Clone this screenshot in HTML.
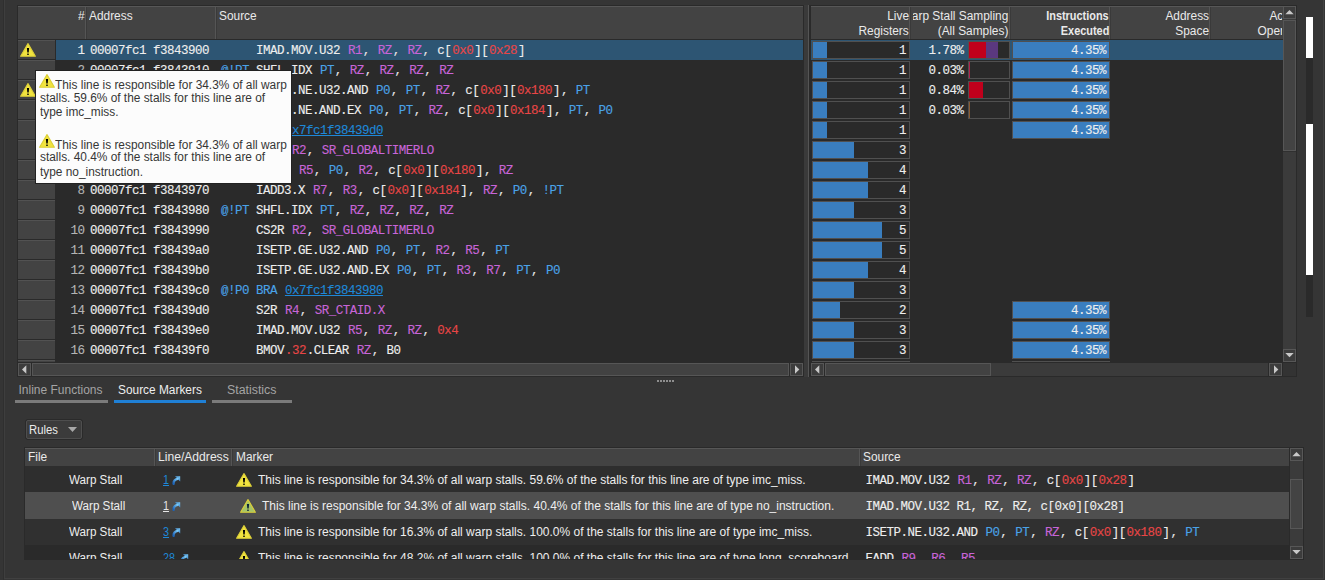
<!DOCTYPE html>
<html><head><meta charset="utf-8"><style>
html,body{margin:0;padding:0;width:1325px;height:580px;overflow:hidden;background:#353535}
body *{position:absolute;box-sizing:content-box}
body span{position:static}
.t{font-family:"Liberation Sans",sans-serif;font-size:12px;line-height:14px;white-space:pre;color:#eaeaea}
.m{font-family:"Liberation Mono",monospace;font-size:12.5px;letter-spacing:-0.5px;line-height:14px;white-space:pre;-webkit-text-stroke:0.12px currentColor}
.m span{padding-right:0.9px}

svg path, svg rect, svg defs, svg stop, svg linearGradient{position:static}
</style></head><body>
<div style="left:0px;top:0px;width:1325px;height:580px;background:#353535;"></div>
<div style="left:3px;top:0px;width:1px;height:580px;background:#2f2f2f;"></div>
<div style="left:4px;top:0px;width:1px;height:578px;background:#3e3e3e;"></div>
<div style="left:4px;top:578px;width:1320px;height:1px;background:#404040;"></div>
<div style="left:1323px;top:0px;width:1px;height:579px;background:#424242;"></div>
<div style="left:17px;top:5px;width:787px;height:372px;background:#2a2a2a;"></div>
<div style="left:18px;top:6px;width:785px;height:33px;background:#434343;"></div>
<div style="left:18px;top:6px;width:785px;height:1px;background:#575757;"></div>
<div style="left:85px;top:7px;width:1px;height:32px;background:#555555;"></div>
<div style="left:86px;top:7px;width:1px;height:32px;background:#3a3a3a;"></div>
<div style="left:215px;top:7px;width:1px;height:32px;background:#555555;"></div>
<div style="left:216px;top:7px;width:1px;height:32px;background:#3a3a3a;"></div>
<div class="t" style="right:1240px;top:9px;color:#eaeaea;transform:scaleX(0.99);transform-origin:100% 0;">#</div>
<div class="t" style="left:89px;top:9px;color:#eaeaea;transform:scaleX(0.99);transform-origin:0 0;">Address</div>
<div class="t" style="left:219px;top:9px;color:#eaeaea;transform:scaleX(0.99);transform-origin:0 0;">Source</div>
<div style="left:18px;top:40px;width:37px;height:19px;background:#434343;"></div>
<div style="left:18px;top:40px;width:37px;height:1px;background:#525252;"></div>
<div style="left:56px;top:40px;width:747px;height:20px;background:#2d5573;"></div>
<div style="left:18px;top:60px;width:37px;height:19px;background:#434343;"></div>
<div style="left:18px;top:60px;width:37px;height:1px;background:#525252;"></div>
<div style="left:56px;top:60px;width:747px;height:20px;background:#2a2a2a;"></div>
<div style="left:18px;top:80px;width:37px;height:19px;background:#434343;"></div>
<div style="left:18px;top:80px;width:37px;height:1px;background:#525252;"></div>
<div style="left:56px;top:80px;width:747px;height:20px;background:#2a2a2a;"></div>
<div style="left:18px;top:100px;width:37px;height:19px;background:#434343;"></div>
<div style="left:18px;top:100px;width:37px;height:1px;background:#525252;"></div>
<div style="left:56px;top:100px;width:747px;height:20px;background:#2a2a2a;"></div>
<div style="left:18px;top:120px;width:37px;height:19px;background:#434343;"></div>
<div style="left:18px;top:120px;width:37px;height:1px;background:#525252;"></div>
<div style="left:56px;top:120px;width:747px;height:20px;background:#2a2a2a;"></div>
<div style="left:18px;top:140px;width:37px;height:19px;background:#434343;"></div>
<div style="left:18px;top:140px;width:37px;height:1px;background:#525252;"></div>
<div style="left:56px;top:140px;width:747px;height:20px;background:#2a2a2a;"></div>
<div style="left:18px;top:160px;width:37px;height:19px;background:#434343;"></div>
<div style="left:18px;top:160px;width:37px;height:1px;background:#525252;"></div>
<div style="left:56px;top:160px;width:747px;height:20px;background:#2a2a2a;"></div>
<div style="left:18px;top:180px;width:37px;height:19px;background:#434343;"></div>
<div style="left:18px;top:180px;width:37px;height:1px;background:#525252;"></div>
<div style="left:56px;top:180px;width:747px;height:20px;background:#2a2a2a;"></div>
<div style="left:18px;top:200px;width:37px;height:19px;background:#434343;"></div>
<div style="left:18px;top:200px;width:37px;height:1px;background:#525252;"></div>
<div style="left:56px;top:200px;width:747px;height:20px;background:#2a2a2a;"></div>
<div style="left:18px;top:220px;width:37px;height:19px;background:#434343;"></div>
<div style="left:18px;top:220px;width:37px;height:1px;background:#525252;"></div>
<div style="left:56px;top:220px;width:747px;height:20px;background:#2a2a2a;"></div>
<div style="left:18px;top:240px;width:37px;height:19px;background:#434343;"></div>
<div style="left:18px;top:240px;width:37px;height:1px;background:#525252;"></div>
<div style="left:56px;top:240px;width:747px;height:20px;background:#2a2a2a;"></div>
<div style="left:18px;top:260px;width:37px;height:19px;background:#434343;"></div>
<div style="left:18px;top:260px;width:37px;height:1px;background:#525252;"></div>
<div style="left:56px;top:260px;width:747px;height:20px;background:#2a2a2a;"></div>
<div style="left:18px;top:280px;width:37px;height:19px;background:#434343;"></div>
<div style="left:18px;top:280px;width:37px;height:1px;background:#525252;"></div>
<div style="left:56px;top:280px;width:747px;height:20px;background:#2a2a2a;"></div>
<div style="left:18px;top:300px;width:37px;height:19px;background:#434343;"></div>
<div style="left:18px;top:300px;width:37px;height:1px;background:#525252;"></div>
<div style="left:56px;top:300px;width:747px;height:20px;background:#2a2a2a;"></div>
<div style="left:18px;top:320px;width:37px;height:19px;background:#434343;"></div>
<div style="left:18px;top:320px;width:37px;height:1px;background:#525252;"></div>
<div style="left:56px;top:320px;width:747px;height:20px;background:#2a2a2a;"></div>
<div style="left:18px;top:340px;width:37px;height:19px;background:#434343;"></div>
<div style="left:18px;top:340px;width:37px;height:1px;background:#525252;"></div>
<div style="left:56px;top:340px;width:747px;height:20px;background:#2a2a2a;"></div>
<div style="left:18px;top:360px;width:37px;height:2px;background:#434343;"></div>
<div style="left:18px;top:360px;width:37px;height:1px;background:#525252;"></div>
<div style="left:56px;top:360px;width:747px;height:2px;background:#2a2a2a;"></div>
<div style="left:56px;top:40px;width:747px;height:322px;overflow:hidden">
<div class="m" style="right:718.5px;top:4px;color:#eeeeee">1</div>
<div class="m" style="left:34px;top:4px;color:#eeeeee">00007fc1 f3843900</div>
<div class="m" style="left:200px;top:4px;color:#eeeeee"><span style="color:#eeeeee">IMAD.MOV.U32 </span><span style="color:#c865d8">R1</span><span style="color:#e6e6e6">, </span><span style="color:#c865d8">RZ</span><span style="color:#e6e6e6">, </span><span style="color:#c865d8">RZ</span><span style="color:#e6e6e6">, </span><span style="color:#eeeeee">c[</span><span style="color:#e84646">0x0</span><span style="color:#eeeeee">][</span><span style="color:#e84646">0x28</span><span style="color:#eeeeee">]</span></div>
<div class="m" style="right:718.5px;top:24px;color:#b4b4b4">2</div>
<div class="m" style="left:34px;top:24px;color:#eeeeee">00007fc1 f3843910</div>
<div class="m" style="left:165px;top:24px;color:#4aa3e8">@!PT</div>
<div class="m" style="left:200px;top:24px;color:#eeeeee"><span style="color:#eeeeee">SHFL.IDX </span><span style="color:#4aa3e8">PT</span><span style="color:#e6e6e6">, </span><span style="color:#c865d8">RZ</span><span style="color:#e6e6e6">, </span><span style="color:#c865d8">RZ</span><span style="color:#e6e6e6">, </span><span style="color:#c865d8">RZ</span><span style="color:#e6e6e6">, </span><span style="color:#c865d8">RZ</span></div>
<div class="m" style="right:718.5px;top:44px;color:#b4b4b4">3</div>
<div class="m" style="left:34px;top:44px;color:#eeeeee">00007fc1 f3843920</div>
<div class="m" style="left:200px;top:44px;color:#eeeeee"><span style="color:#eeeeee">ISETP.NE.U32.AND </span><span style="color:#4aa3e8">P0</span><span style="color:#e6e6e6">, </span><span style="color:#4aa3e8">PT</span><span style="color:#e6e6e6">, </span><span style="color:#c865d8">RZ</span><span style="color:#e6e6e6">, </span><span style="color:#eeeeee">c[</span><span style="color:#e84646">0x0</span><span style="color:#eeeeee">][</span><span style="color:#e84646">0x180</span><span style="color:#eeeeee">]</span><span style="color:#e6e6e6">, </span><span style="color:#4aa3e8">PT</span></div>
<div class="m" style="right:718.5px;top:64px;color:#b4b4b4">4</div>
<div class="m" style="left:34px;top:64px;color:#eeeeee">00007fc1 f3843930</div>
<div class="m" style="left:200px;top:64px;color:#eeeeee"><span style="color:#eeeeee">ISETP.NE.AND.EX </span><span style="color:#4aa3e8">P0</span><span style="color:#e6e6e6">, </span><span style="color:#4aa3e8">PT</span><span style="color:#e6e6e6">, </span><span style="color:#c865d8">RZ</span><span style="color:#e6e6e6">, </span><span style="color:#eeeeee">c[</span><span style="color:#e84646">0x0</span><span style="color:#eeeeee">][</span><span style="color:#e84646">0x184</span><span style="color:#eeeeee">]</span><span style="color:#e6e6e6">, </span><span style="color:#4aa3e8">PT</span><span style="color:#e6e6e6">, </span><span style="color:#4aa3e8">P0</span></div>
<div class="m" style="right:718.5px;top:84px;color:#b4b4b4">5</div>
<div class="m" style="left:34px;top:84px;color:#eeeeee">00007fc1 f3843940</div>
<div class="m" style="left:165px;top:84px;color:#4aa3e8">@!P0</div>
<div class="m" style="left:200px;top:84px;color:#eeeeee"><span style="color:#4aa3e8">BRA </span><span style="color:#1e88d8;text-decoration:underline">0x7fc1f38439d0</span></div>
<div class="m" style="right:718.5px;top:104px;color:#b4b4b4">6</div>
<div class="m" style="left:34px;top:104px;color:#eeeeee">00007fc1 f3843950</div>
<div class="m" style="left:200px;top:104px;color:#eeeeee"><span style="color:#eeeeee">CS2R </span><span style="color:#c865d8">R2</span><span style="color:#e6e6e6">, </span><span style="color:#c865d8">SR_GLOBALTIMERLO</span></div>
<div class="m" style="right:718.5px;top:124px;color:#b4b4b4">7</div>
<div class="m" style="left:34px;top:124px;color:#eeeeee">00007fc1 f3843960</div>
<div class="m" style="left:200px;top:124px;color:#eeeeee"><span style="color:#eeeeee">IADD3 </span><span style="color:#c865d8">R5</span><span style="color:#e6e6e6">, </span><span style="color:#4aa3e8">P0</span><span style="color:#e6e6e6">, </span><span style="color:#c865d8">R2</span><span style="color:#e6e6e6">, </span><span style="color:#eeeeee">c[</span><span style="color:#e84646">0x0</span><span style="color:#eeeeee">][</span><span style="color:#e84646">0x180</span><span style="color:#eeeeee">]</span><span style="color:#e6e6e6">, </span><span style="color:#c865d8">RZ</span></div>
<div class="m" style="right:718.5px;top:144px;color:#b4b4b4">8</div>
<div class="m" style="left:34px;top:144px;color:#eeeeee">00007fc1 f3843970</div>
<div class="m" style="left:200px;top:144px;color:#eeeeee"><span style="color:#eeeeee">IADD3.X </span><span style="color:#c865d8">R7</span><span style="color:#e6e6e6">, </span><span style="color:#c865d8">R3</span><span style="color:#e6e6e6">, </span><span style="color:#eeeeee">c[</span><span style="color:#e84646">0x0</span><span style="color:#eeeeee">][</span><span style="color:#e84646">0x184</span><span style="color:#eeeeee">]</span><span style="color:#e6e6e6">, </span><span style="color:#c865d8">RZ</span><span style="color:#e6e6e6">, </span><span style="color:#4aa3e8">P0</span><span style="color:#e6e6e6">, </span><span style="color:#4aa3e8">!PT</span></div>
<div class="m" style="right:718.5px;top:164px;color:#b4b4b4">9</div>
<div class="m" style="left:34px;top:164px;color:#eeeeee">00007fc1 f3843980</div>
<div class="m" style="left:165px;top:164px;color:#4aa3e8">@!PT</div>
<div class="m" style="left:200px;top:164px;color:#eeeeee"><span style="color:#eeeeee">SHFL.IDX </span><span style="color:#4aa3e8">PT</span><span style="color:#e6e6e6">, </span><span style="color:#c865d8">RZ</span><span style="color:#e6e6e6">, </span><span style="color:#c865d8">RZ</span><span style="color:#e6e6e6">, </span><span style="color:#c865d8">RZ</span><span style="color:#e6e6e6">, </span><span style="color:#c865d8">RZ</span></div>
<div class="m" style="right:718.5px;top:184px;color:#b4b4b4">10</div>
<div class="m" style="left:34px;top:184px;color:#eeeeee">00007fc1 f3843990</div>
<div class="m" style="left:200px;top:184px;color:#eeeeee"><span style="color:#eeeeee">CS2R </span><span style="color:#c865d8">R2</span><span style="color:#e6e6e6">, </span><span style="color:#c865d8">SR_GLOBALTIMERLO</span></div>
<div class="m" style="right:718.5px;top:204px;color:#b4b4b4">11</div>
<div class="m" style="left:34px;top:204px;color:#eeeeee">00007fc1 f38439a0</div>
<div class="m" style="left:200px;top:204px;color:#eeeeee"><span style="color:#eeeeee">ISETP.GE.U32.AND </span><span style="color:#4aa3e8">P0</span><span style="color:#e6e6e6">, </span><span style="color:#4aa3e8">PT</span><span style="color:#e6e6e6">, </span><span style="color:#c865d8">R2</span><span style="color:#e6e6e6">, </span><span style="color:#c865d8">R5</span><span style="color:#e6e6e6">, </span><span style="color:#4aa3e8">PT</span></div>
<div class="m" style="right:718.5px;top:224px;color:#b4b4b4">12</div>
<div class="m" style="left:34px;top:224px;color:#eeeeee">00007fc1 f38439b0</div>
<div class="m" style="left:200px;top:224px;color:#eeeeee"><span style="color:#eeeeee">ISETP.GE.U32.AND.EX </span><span style="color:#4aa3e8">P0</span><span style="color:#e6e6e6">, </span><span style="color:#4aa3e8">PT</span><span style="color:#e6e6e6">, </span><span style="color:#c865d8">R3</span><span style="color:#e6e6e6">, </span><span style="color:#c865d8">R7</span><span style="color:#e6e6e6">, </span><span style="color:#4aa3e8">PT</span><span style="color:#e6e6e6">, </span><span style="color:#4aa3e8">P0</span></div>
<div class="m" style="right:718.5px;top:244px;color:#b4b4b4">13</div>
<div class="m" style="left:34px;top:244px;color:#eeeeee">00007fc1 f38439c0</div>
<div class="m" style="left:165px;top:244px;color:#4aa3e8">@!P0</div>
<div class="m" style="left:200px;top:244px;color:#eeeeee"><span style="color:#4aa3e8">BRA </span><span style="color:#1e88d8;text-decoration:underline">0x7fc1f3843980</span></div>
<div class="m" style="right:718.5px;top:264px;color:#b4b4b4">14</div>
<div class="m" style="left:34px;top:264px;color:#eeeeee">00007fc1 f38439d0</div>
<div class="m" style="left:200px;top:264px;color:#eeeeee"><span style="color:#eeeeee">S2R </span><span style="color:#c865d8">R4</span><span style="color:#e6e6e6">, </span><span style="color:#c865d8">SR_CTAID.X</span></div>
<div class="m" style="right:718.5px;top:284px;color:#b4b4b4">15</div>
<div class="m" style="left:34px;top:284px;color:#eeeeee">00007fc1 f38439e0</div>
<div class="m" style="left:200px;top:284px;color:#eeeeee"><span style="color:#eeeeee">IMAD.MOV.U32 </span><span style="color:#c865d8">R5</span><span style="color:#e6e6e6">, </span><span style="color:#c865d8">RZ</span><span style="color:#e6e6e6">, </span><span style="color:#c865d8">RZ</span><span style="color:#e6e6e6">, </span><span style="color:#e84646">0x4</span></div>
<div class="m" style="right:718.5px;top:304px;color:#b4b4b4">16</div>
<div class="m" style="left:34px;top:304px;color:#eeeeee">00007fc1 f38439f0</div>
<div class="m" style="left:200px;top:304px;color:#eeeeee"><span style="color:#eeeeee">BMOV</span><span style="color:#e84646">.32</span><span style="color:#eeeeee">.CLEAR </span><span style="color:#c865d8">RZ</span><span style="color:#e6e6e6">, </span><span style="color:#eeeeee">B0</span></div>
</div>
<div style="left:20px;top:43px;width:16px;height:14px;"><svg width="16" height="14" viewBox="0 0 16 14"><path d="M8 0.6 L15.4 13.2 L0.6 13.2 Z" fill="#f1e33f" stroke="#dccf38" stroke-width="1.1" stroke-linejoin="round"/><path d="M6.9 5.0 L9.1 5.0 L8.7 9.6 L7.3 9.6 Z" fill="#000"/><rect x="7.1" y="10.4" width="1.8" height="1.6" rx="0.7" fill="#000"/></svg></div>
<div style="left:20px;top:83px;width:16px;height:14px;"><svg width="16" height="14" viewBox="0 0 16 14"><path d="M8 0.6 L15.4 13.2 L0.6 13.2 Z" fill="#f1e33f" stroke="#dccf38" stroke-width="1.1" stroke-linejoin="round"/><path d="M6.9 5.0 L9.1 5.0 L8.7 9.6 L7.3 9.6 Z" fill="#000"/><rect x="7.1" y="10.4" width="1.8" height="1.6" rx="0.7" fill="#000"/></svg></div>
<div style="left:18px;top:362px;width:785px;height:14px;background:#2a2a2a;"></div>
<div style="left:18px;top:363px;width:11px;height:11px;border:1px solid #575757;background:#3c3c3c"></div>
<svg style="left:22px;top:365px" width="5" height="9"><path d="M4.3 0.3 L0 4.5 L4.3 8.7 Z" fill="#c8c8c8"/></svg>
<div style="left:32px;top:363px;width:755px;height:11px;border:1px solid #565656;background:#424242"></div>
<div style="left:790px;top:363px;width:11px;height:11px;border:1px solid #575757;background:#3c3c3c"></div>
<svg style="left:795px;top:365px" width="5" height="9"><path d="M0 0.3 L4.3 4.5 L0 8.7 Z" fill="#c8c8c8"/></svg>
<div style="left:804px;top:5px;width:4px;height:372px;background:#3a3a3a;"></div>
<div style="left:808px;top:5px;width:1px;height:372px;background:#555555;"></div>
<div style="left:809px;top:5px;width:488px;height:372px;background:#2a2a2a;"></div>
<div style="left:811px;top:6px;width:472px;height:33px;background:#434343;"></div>
<div style="left:811px;top:6px;width:472px;height:1px;background:#575757;"></div>
<div style="left:909px;top:7px;width:1px;height:32px;background:#555555;"></div>
<div style="left:910px;top:7px;width:1px;height:32px;background:#3a3a3a;"></div>
<div style="left:1009px;top:7px;width:1px;height:32px;background:#555555;"></div>
<div style="left:1010px;top:7px;width:1px;height:32px;background:#3a3a3a;"></div>
<div style="left:1109px;top:7px;width:1px;height:32px;background:#555555;"></div>
<div style="left:1110px;top:7px;width:1px;height:32px;background:#3a3a3a;"></div>
<div style="left:1209px;top:7px;width:1px;height:32px;background:#555555;"></div>
<div style="left:1210px;top:7px;width:1px;height:32px;background:#3a3a3a;"></div>
<div style="left:811px;top:6px;width:472px;height:33px;overflow:hidden">
<div class="t" style="right:374px;top:3px;transform:scaleX(0.99);transform-origin:100% 0">Live</div>
<div class="t" style="right:374px;top:18px;transform:scaleX(0.99);transform-origin:100% 0">Registers</div>
<div style="left:102px;top:0;width:96px;height:33px;overflow:hidden"><div class="t" style="right:0.5px;top:3px;transform:scaleX(0.99);transform-origin:100% 0">Warp Stall Sampling</div></div>
<div class="t" style="right:274.5px;top:18px;transform:scaleX(0.99);transform-origin:100% 0">(All Samples)</div>
<div class="t" style="right:174px;top:3px;font-weight:bold;transform:scaleX(0.91);transform-origin:100% 0">Instructions</div>
<div class="t" style="right:174px;top:18px;font-weight:bold;transform:scaleX(0.91);transform-origin:100% 0">Executed</div>
<div class="t" style="right:74px;top:3px;transform:scaleX(0.99);transform-origin:100% 0">Address</div>
<div class="t" style="right:73.5px;top:18px;transform:scaleX(0.99);transform-origin:100% 0">Space</div>
<div style="left:400px;top:0;width:71px;height:33px;overflow:hidden"><div class="t" style="right:-26px;top:3px;transform:scaleX(0.99);transform-origin:100% 0">Access</div></div>
<div style="left:400px;top:0;width:71px;height:33px;overflow:hidden"><div class="t" style="right:-33.5px;top:18px;transform:scaleX(0.99);transform-origin:100% 0">Operations</div></div>
</div>
<div style="left:811px;top:40px;width:472px;height:20px;background:#2d5573;"></div>
<div style="left:811px;top:60px;width:472px;height:20px;background:#2a2a2a;"></div>
<div style="left:811px;top:80px;width:472px;height:20px;background:#2a2a2a;"></div>
<div style="left:811px;top:100px;width:472px;height:20px;background:#2a2a2a;"></div>
<div style="left:811px;top:120px;width:472px;height:20px;background:#2a2a2a;"></div>
<div style="left:811px;top:140px;width:472px;height:20px;background:#2a2a2a;"></div>
<div style="left:811px;top:160px;width:472px;height:20px;background:#2a2a2a;"></div>
<div style="left:811px;top:180px;width:472px;height:20px;background:#2a2a2a;"></div>
<div style="left:811px;top:200px;width:472px;height:20px;background:#2a2a2a;"></div>
<div style="left:811px;top:220px;width:472px;height:20px;background:#2a2a2a;"></div>
<div style="left:811px;top:240px;width:472px;height:20px;background:#2a2a2a;"></div>
<div style="left:811px;top:260px;width:472px;height:20px;background:#2a2a2a;"></div>
<div style="left:811px;top:280px;width:472px;height:20px;background:#2a2a2a;"></div>
<div style="left:811px;top:300px;width:472px;height:20px;background:#2a2a2a;"></div>
<div style="left:811px;top:320px;width:472px;height:20px;background:#2a2a2a;"></div>
<div style="left:811px;top:340px;width:472px;height:20px;background:#2a2a2a;"></div>
<div style="left:811px;top:360px;width:472px;height:2px;background:#2a2a2a;"></div>
<div style="left:811px;top:40px;width:472px;height:322px;overflow:hidden">
<div style="left:1px;top:1px;width:96px;height:16px;border:1px solid #505050;background:#2a2a2a"></div>
<div style="left:2px;top:2px;width:14px;height:16px;background:#3a7ebf"></div>
<div class="m" style="right:377px;top:4px;color:#eeeeee">1</div>
<div class="m" style="right:319.5px;top:4px;color:#eeeeee">1.78%</div>
<div style="left:157px;top:1px;width:40px;height:16px;border:1px solid #505050;background:#2a2a2a"></div>
<div style="left:158px;top:2px;width:17px;height:16px;background:#c1001c"></div>
<div style="left:175px;top:2px;width:12px;height:16px;background:#5a3880"></div>
<div style="left:201px;top:1px;width:96px;height:16px;border:1px solid #505050;background:#3a7ebf"></div>
<div class="m" style="right:177px;top:4px;color:#eeeeee">4.35%</div>
<div style="left:1px;top:21px;width:96px;height:16px;border:1px solid #505050;background:#2a2a2a"></div>
<div style="left:2px;top:22px;width:14px;height:16px;background:#3a7ebf"></div>
<div class="m" style="right:377px;top:24px;color:#eeeeee">1</div>
<div class="m" style="right:319.5px;top:24px;color:#eeeeee">0.03%</div>
<div style="left:157px;top:21px;width:40px;height:16px;border:1px solid #505050;background:#2a2a2a"></div>
<div style="left:158px;top:22px;width:1px;height:16px;background:#b0204a"></div>
<div style="left:201px;top:21px;width:96px;height:16px;border:1px solid #505050;background:#3a7ebf"></div>
<div class="m" style="right:177px;top:24px;color:#eeeeee">4.35%</div>
<div style="left:1px;top:41px;width:96px;height:16px;border:1px solid #505050;background:#2a2a2a"></div>
<div style="left:2px;top:42px;width:14px;height:16px;background:#3a7ebf"></div>
<div class="m" style="right:377px;top:44px;color:#eeeeee">1</div>
<div class="m" style="right:319.5px;top:44px;color:#eeeeee">0.84%</div>
<div style="left:157px;top:41px;width:40px;height:16px;border:1px solid #505050;background:#2a2a2a"></div>
<div style="left:158px;top:42px;width:14px;height:16px;background:#c1001c"></div>
<div style="left:201px;top:41px;width:96px;height:16px;border:1px solid #505050;background:#3a7ebf"></div>
<div class="m" style="right:177px;top:44px;color:#eeeeee">4.35%</div>
<div style="left:1px;top:61px;width:96px;height:16px;border:1px solid #505050;background:#2a2a2a"></div>
<div style="left:2px;top:62px;width:14px;height:16px;background:#3a7ebf"></div>
<div class="m" style="right:377px;top:64px;color:#eeeeee">1</div>
<div class="m" style="right:319.5px;top:64px;color:#eeeeee">0.03%</div>
<div style="left:157px;top:61px;width:40px;height:16px;border:1px solid #505050;background:#2a2a2a"></div>
<div style="left:158px;top:62px;width:1px;height:16px;background:#8a5a30"></div>
<div style="left:201px;top:61px;width:96px;height:16px;border:1px solid #505050;background:#3a7ebf"></div>
<div class="m" style="right:177px;top:64px;color:#eeeeee">4.35%</div>
<div style="left:1px;top:81px;width:96px;height:16px;border:1px solid #505050;background:#2a2a2a"></div>
<div style="left:2px;top:82px;width:14px;height:16px;background:#3a7ebf"></div>
<div class="m" style="right:377px;top:84px;color:#eeeeee">1</div>
<div style="left:201px;top:81px;width:96px;height:16px;border:1px solid #505050;background:#3a7ebf"></div>
<div class="m" style="right:177px;top:84px;color:#eeeeee">4.35%</div>
<div style="left:1px;top:101px;width:96px;height:16px;border:1px solid #505050;background:#2a2a2a"></div>
<div style="left:2px;top:102px;width:41px;height:16px;background:#3a7ebf"></div>
<div class="m" style="right:377px;top:104px;color:#eeeeee">3</div>
<div style="left:1px;top:121px;width:96px;height:16px;border:1px solid #505050;background:#2a2a2a"></div>
<div style="left:2px;top:122px;width:55px;height:16px;background:#3a7ebf"></div>
<div class="m" style="right:377px;top:124px;color:#eeeeee">4</div>
<div style="left:1px;top:141px;width:96px;height:16px;border:1px solid #505050;background:#2a2a2a"></div>
<div style="left:2px;top:142px;width:55px;height:16px;background:#3a7ebf"></div>
<div class="m" style="right:377px;top:144px;color:#eeeeee">4</div>
<div style="left:1px;top:161px;width:96px;height:16px;border:1px solid #505050;background:#2a2a2a"></div>
<div style="left:2px;top:162px;width:41px;height:16px;background:#3a7ebf"></div>
<div class="m" style="right:377px;top:164px;color:#eeeeee">3</div>
<div style="left:1px;top:181px;width:96px;height:16px;border:1px solid #505050;background:#2a2a2a"></div>
<div style="left:2px;top:182px;width:69px;height:16px;background:#3a7ebf"></div>
<div class="m" style="right:377px;top:184px;color:#eeeeee">5</div>
<div style="left:1px;top:201px;width:96px;height:16px;border:1px solid #505050;background:#2a2a2a"></div>
<div style="left:2px;top:202px;width:69px;height:16px;background:#3a7ebf"></div>
<div class="m" style="right:377px;top:204px;color:#eeeeee">5</div>
<div style="left:1px;top:221px;width:96px;height:16px;border:1px solid #505050;background:#2a2a2a"></div>
<div style="left:2px;top:222px;width:55px;height:16px;background:#3a7ebf"></div>
<div class="m" style="right:377px;top:224px;color:#eeeeee">4</div>
<div style="left:1px;top:241px;width:96px;height:16px;border:1px solid #505050;background:#2a2a2a"></div>
<div style="left:2px;top:242px;width:41px;height:16px;background:#3a7ebf"></div>
<div class="m" style="right:377px;top:244px;color:#eeeeee">3</div>
<div style="left:1px;top:261px;width:96px;height:16px;border:1px solid #505050;background:#2a2a2a"></div>
<div style="left:2px;top:262px;width:27px;height:16px;background:#3a7ebf"></div>
<div class="m" style="right:377px;top:264px;color:#eeeeee">2</div>
<div style="left:201px;top:261px;width:96px;height:16px;border:1px solid #505050;background:#3a7ebf"></div>
<div class="m" style="right:177px;top:264px;color:#eeeeee">4.35%</div>
<div style="left:1px;top:281px;width:96px;height:16px;border:1px solid #505050;background:#2a2a2a"></div>
<div style="left:2px;top:282px;width:41px;height:16px;background:#3a7ebf"></div>
<div class="m" style="right:377px;top:284px;color:#eeeeee">3</div>
<div style="left:201px;top:281px;width:96px;height:16px;border:1px solid #505050;background:#3a7ebf"></div>
<div class="m" style="right:177px;top:284px;color:#eeeeee">4.35%</div>
<div style="left:1px;top:301px;width:96px;height:16px;border:1px solid #505050;background:#2a2a2a"></div>
<div style="left:2px;top:302px;width:41px;height:16px;background:#3a7ebf"></div>
<div class="m" style="right:377px;top:304px;color:#eeeeee">3</div>
<div style="left:201px;top:301px;width:96px;height:16px;border:1px solid #505050;background:#3a7ebf"></div>
<div class="m" style="right:177px;top:304px;color:#eeeeee">4.35%</div>
<div style="left:1px;top:321px;width:96px;height:16px;border:1px solid #505050;background:#2a2a2a"></div>
<div style="left:2px;top:322px;width:41px;height:16px;background:#3a7ebf"></div>
<div style="left:201px;top:321px;width:96px;height:16px;border:1px solid #505050;background:#3a7ebf"></div>
</div>
<div style="left:1283px;top:6px;width:13px;height:356px;background:#3b3b3b;"></div>
<div style="left:1283px;top:6px;width:11px;height:11px;border:1px solid #575757;background:#3c3c3c"></div>
<svg style="left:1285px;top:10px" width="9" height="5"><path d="M0.3 4.3 L4.5 0 L8.7 4.3 Z" fill="#c8c8c8"/></svg>
<div style="left:1283px;top:20px;width:11px;height:129px;border:1px solid #565656;background:#434343"></div>
<div style="left:1283px;top:151px;width:13px;height:1px;background:#303030;"></div>
<div style="left:1283px;top:349px;width:11px;height:11px;border:1px solid #575757;background:#3c3c3c"></div>
<svg style="left:1285px;top:353px" width="9" height="5"><path d="M0.3 0 L4.5 4.3 L8.7 0 Z" fill="#c8c8c8"/></svg>
<div style="left:811px;top:362px;width:472px;height:14px;background:#2a2a2a;"></div>
<div style="left:811px;top:363px;width:11px;height:11px;border:1px solid #575757;background:#3c3c3c"></div>
<svg style="left:815px;top:365px" width="5" height="9"><path d="M4.3 0.3 L0 4.5 L4.3 8.7 Z" fill="#c8c8c8"/></svg>
<div style="left:825px;top:363px;width:164px;height:11px;border:1px solid #565656;background:#424242"></div>
<div style="left:991px;top:363px;width:277px;height:13px;background:#3b3b3b;"></div>
<div style="left:1269px;top:363px;width:11px;height:11px;border:1px solid #575757;background:#3c3c3c"></div>
<svg style="left:1274px;top:365px" width="5" height="9"><path d="M0 0.3 L4.3 4.5 L0 8.7 Z" fill="#c8c8c8"/></svg>
<div style="left:1283px;top:363px;width:13px;height:13px;background:#333333;"></div>
<div style="left:1306px;top:17px;width:7px;height:300px;background:#2a2a2a;"></div>
<div style="left:1306px;top:17px;width:7px;height:41px;background:#ffffff;"></div>
<div style="left:1306px;top:124px;width:7px;height:151px;background:#ffffff;"></div>
<div style="left:657px;top:380px;width:2px;height:2px;background:#8e8e8e;"></div>
<div style="left:660px;top:380px;width:2px;height:2px;background:#8e8e8e;"></div>
<div style="left:663px;top:380px;width:2px;height:2px;background:#8e8e8e;"></div>
<div style="left:666px;top:380px;width:2px;height:2px;background:#8e8e8e;"></div>
<div style="left:669px;top:380px;width:2px;height:2px;background:#8e8e8e;"></div>
<div style="left:672px;top:380px;width:2px;height:2px;background:#8e8e8e;"></div>
<div class="t" style="left:18.5px;top:383px;color:#a4a4a4;transform:scaleX(1.0);transform-origin:0 0;">Inline Functions</div>
<div style="left:15px;top:400px;width:93px;height:3px;background:#7b7b7b;"></div>
<div class="t" style="left:118px;top:383px;color:#eeeeee;transform:scaleX(0.99);transform-origin:0 0;">Source Markers</div>
<div style="left:114px;top:400px;width:92px;height:3px;background:#1f80d6;"></div>
<div class="t" style="left:227px;top:383px;color:#a4a4a4;transform:scaleX(1.03);transform-origin:0 0;">Statistics</div>
<div style="left:212px;top:400px;width:80px;height:3px;background:#7b7b7b;"></div>
<div style="left:25px;top:419px;width:56px;height:19px;border:1px solid #2a2a2a;border-radius:3px;background:#2a2a2a"></div>
<div style="left:26px;top:420px;width:54px;height:17px;border:1px solid #4e4e4e;border-radius:2px;background:#3b3b3b"></div>
<div class="t" style="left:29px;top:423px;color:#eaeaea;transform:scaleX(0.94);transform-origin:0 0;">Rules</div>
<svg style="left:68px;top:427px" width="9" height="5"><path d="M0 0 L9 0 L4.5 5 Z" fill="#a8a8a8"/></svg>
<div style="left:24px;top:447px;width:1280px;height:113px;background:#2a2a2a;"></div>
<div style="left:25px;top:448px;width:1264px;height:18px;background:#434343;"></div>
<div style="left:25px;top:448px;width:1264px;height:1px;background:#575757;"></div>
<div style="left:154px;top:449px;width:1px;height:17px;background:#555555;"></div>
<div style="left:155px;top:449px;width:1px;height:17px;background:#3a3a3a;"></div>
<div style="left:231px;top:449px;width:1px;height:17px;background:#555555;"></div>
<div style="left:232px;top:449px;width:1px;height:17px;background:#3a3a3a;"></div>
<div style="left:859px;top:449px;width:1px;height:17px;background:#555555;"></div>
<div style="left:860px;top:449px;width:1px;height:17px;background:#3a3a3a;"></div>
<div class="t" style="left:27.5px;top:450px;color:#eaeaea;transform:scaleX(0.99);transform-origin:0 0;">File</div>
<div class="t" style="left:158px;top:450px;color:#eaeaea;transform:scaleX(1.01);transform-origin:0 0;">Line/Address</div>
<div class="t" style="left:235.5px;top:450px;color:#eaeaea;transform:scaleX(0.99);transform-origin:0 0;">Marker</div>
<div class="t" style="left:863px;top:450px;color:#eaeaea;transform:scaleX(0.99);transform-origin:0 0;">Source</div>
<div style="left:25px;top:466px;width:1264px;height:26px;background:#2e2e2e;"></div>
<div style="left:25px;top:492px;width:1264px;height:27px;background:#4f4f4f;"></div>
<div style="left:25px;top:519px;width:1264px;height:26px;background:#303030;"></div>
<div style="left:25px;top:545px;width:1264px;height:14px;background:#2a2a2a;"></div>
<div style="left:1290px;top:448px;width:13px;height:111px;background:#3b3b3b;"></div>
<div style="left:1290px;top:448px;width:11px;height:11px;border:1px solid #575757;background:#3c3c3c"></div>
<svg style="left:1292px;top:452px" width="9" height="5"><path d="M0.3 4.3 L4.5 0 L8.7 4.3 Z" fill="#c8c8c8"/></svg>
<div style="left:1290px;top:479px;width:11px;height:48px;border:1px solid #575757;background:#434343"></div>
<div style="left:1290px;top:546px;width:11px;height:11px;border:1px solid #575757;background:#3c3c3c"></div>
<svg style="left:1292px;top:550px" width="9" height="5"><path d="M0.3 0 L4.5 4.3 L8.7 0 Z" fill="#c8c8c8"/></svg>
<div style="left:25px;top:466px;width:1264px;height:93px;overflow:hidden">
<div class="t" style="left:43.5px;top:7px;color:#eeeeee;transform:scaleX(0.97);transform-origin:0 0">Warp Stall</div>
<div class="t" style="left:138px;top:7px;color:#1e88d8;text-decoration:underline;text-underline-offset:1px;transform:scaleX(0.9);transform-origin:0 0">1</div>
<div style="left:146.5px;top:8.5px;width:9px;height:10px"><svg width="9" height="10" viewBox="0 0 9 10"><defs><linearGradient id="ag" x1="0" y1="1" x2="1" y2="0"><stop offset="0" stop-color="#1a62b8"/><stop offset="1" stop-color="#7ccaf6"/></linearGradient></defs><path d="M3 1.2 L8.2 1.2 L8.2 6.4 Z" fill="url(#ag)"/><path d="M1.6 8.8 C1.2 6.2 2.8 4.6 5.6 3.8" fill="none" stroke="url(#ag)" stroke-width="2.3" stroke-linecap="round"/></svg></div>
<div style="left:211px;top:7px;width:16px;height:14px"><svg width="16" height="14" viewBox="0 0 16 14"><path d="M8 0.6 L15.4 13.2 L0.6 13.2 Z" fill="#f1e33f" stroke="#dccf38" stroke-width="1.1" stroke-linejoin="round"/><path d="M6.9 5.0 L9.1 5.0 L8.7 9.6 L7.3 9.6 Z" fill="#000"/><rect x="7.1" y="10.4" width="1.8" height="1.6" rx="0.7" fill="#000"/></svg></div>
<div class="t" style="left:233px;top:7px;color:#eeeeee">This line is responsible for 34.3% of all warp stalls. 59.6% of the stalls for this line are of type imc_miss.</div>
<div class="m" style="left:840.5px;top:8px;color:#eeeeee"><span style="color:#eeeeee">IMAD.MOV.U32 </span><span style="color:#c865d8">R1</span><span style="color:#e6e6e6">, </span><span style="color:#c865d8">RZ</span><span style="color:#e6e6e6">, </span><span style="color:#c865d8">RZ</span><span style="color:#e6e6e6">, </span><span style="color:#eeeeee">c[</span><span style="color:#e84646">0x0</span><span style="color:#eeeeee">][</span><span style="color:#e84646">0x28</span><span style="color:#eeeeee">]</span></div>
<div class="t" style="left:47px;top:33px;color:#eeeeee;transform:scaleX(0.97);transform-origin:0 0">Warp Stall</div>
<div class="t" style="left:138px;top:33px;color:#e6e6e6;text-decoration:underline;text-underline-offset:1px;transform:scaleX(0.9);transform-origin:0 0">1</div>
<div style="left:146.5px;top:34.5px;width:9px;height:10px"><svg width="9" height="10" viewBox="0 0 9 10"><defs><linearGradient id="ag" x1="0" y1="1" x2="1" y2="0"><stop offset="0" stop-color="#1a62b8"/><stop offset="1" stop-color="#7ccaf6"/></linearGradient></defs><path d="M3 1.2 L8.2 1.2 L8.2 6.4 Z" fill="url(#ag)"/><path d="M1.6 8.8 C1.2 6.2 2.8 4.6 5.6 3.8" fill="none" stroke="url(#ag)" stroke-width="2.3" stroke-linecap="round"/></svg></div>
<div style="left:215px;top:33px;width:16px;height:14px"><svg width="16" height="14" viewBox="0 0 16 14"><path d="M8 0.6 L15.4 13.2 L0.6 13.2 Z" fill="#a6c466" stroke="#dccf38" stroke-width="1.1" stroke-linejoin="round"/><path d="M6.9 5.0 L9.1 5.0 L8.7 9.6 L7.3 9.6 Z" fill="#0b2238"/><rect x="7.1" y="10.4" width="1.8" height="1.6" rx="0.7" fill="#0b2238"/></svg></div>
<div class="t" style="left:237px;top:33px;color:#eeeeee">This line is responsible for 34.3% of all warp stalls. 40.4% of the stalls for this line are of type no_instruction.</div>
<div class="m" style="left:840.5px;top:34px;color:#eeeeee">IMAD.MOV.U32 R1, RZ, RZ, c[0x0][0x28]</div>
<div class="t" style="left:43.5px;top:59px;color:#eeeeee;transform:scaleX(0.97);transform-origin:0 0">Warp Stall</div>
<div class="t" style="left:138px;top:59px;color:#1e88d8;text-decoration:underline;text-underline-offset:1px;transform:scaleX(0.9);transform-origin:0 0">3</div>
<div style="left:146.5px;top:60.5px;width:9px;height:10px"><svg width="9" height="10" viewBox="0 0 9 10"><defs><linearGradient id="ag" x1="0" y1="1" x2="1" y2="0"><stop offset="0" stop-color="#1a62b8"/><stop offset="1" stop-color="#7ccaf6"/></linearGradient></defs><path d="M3 1.2 L8.2 1.2 L8.2 6.4 Z" fill="url(#ag)"/><path d="M1.6 8.8 C1.2 6.2 2.8 4.6 5.6 3.8" fill="none" stroke="url(#ag)" stroke-width="2.3" stroke-linecap="round"/></svg></div>
<div style="left:211px;top:59px;width:16px;height:14px"><svg width="16" height="14" viewBox="0 0 16 14"><path d="M8 0.6 L15.4 13.2 L0.6 13.2 Z" fill="#f1e33f" stroke="#dccf38" stroke-width="1.1" stroke-linejoin="round"/><path d="M6.9 5.0 L9.1 5.0 L8.7 9.6 L7.3 9.6 Z" fill="#000"/><rect x="7.1" y="10.4" width="1.8" height="1.6" rx="0.7" fill="#000"/></svg></div>
<div class="t" style="left:233px;top:59px;color:#eeeeee">This line is responsible for 16.3% of all warp stalls. 100.0% of the stalls for this line are of type imc_miss.</div>
<div class="m" style="left:840.5px;top:60px;color:#eeeeee"><span style="color:#eeeeee">ISETP.NE.U32.AND </span><span style="color:#4aa3e8">P0</span><span style="color:#e6e6e6">, </span><span style="color:#4aa3e8">PT</span><span style="color:#e6e6e6">, </span><span style="color:#c865d8">RZ</span><span style="color:#e6e6e6">, </span><span style="color:#eeeeee">c[</span><span style="color:#e84646">0x0</span><span style="color:#eeeeee">][</span><span style="color:#e84646">0x180</span><span style="color:#eeeeee">]</span><span style="color:#e6e6e6">, </span><span style="color:#4aa3e8">PT</span></div>
<div class="t" style="left:43.5px;top:85px;color:#eeeeee;transform:scaleX(0.97);transform-origin:0 0">Warp Stall</div>
<div class="t" style="left:138px;top:85px;color:#1e88d8;text-decoration:underline;text-underline-offset:1px;transform:scaleX(0.9);transform-origin:0 0">28</div>
<div style="left:154.5px;top:86.5px;width:9px;height:10px"><svg width="9" height="10" viewBox="0 0 9 10"><defs><linearGradient id="ag" x1="0" y1="1" x2="1" y2="0"><stop offset="0" stop-color="#1a62b8"/><stop offset="1" stop-color="#7ccaf6"/></linearGradient></defs><path d="M3 1.2 L8.2 1.2 L8.2 6.4 Z" fill="url(#ag)"/><path d="M1.6 8.8 C1.2 6.2 2.8 4.6 5.6 3.8" fill="none" stroke="url(#ag)" stroke-width="2.3" stroke-linecap="round"/></svg></div>
<div style="left:211px;top:85px;width:16px;height:14px"><svg width="16" height="14" viewBox="0 0 16 14"><path d="M8 0.6 L15.4 13.2 L0.6 13.2 Z" fill="#f1e33f" stroke="#dccf38" stroke-width="1.1" stroke-linejoin="round"/><path d="M6.9 5.0 L9.1 5.0 L8.7 9.6 L7.3 9.6 Z" fill="#000"/><rect x="7.1" y="10.4" width="1.8" height="1.6" rx="0.7" fill="#000"/></svg></div>
<div class="t" style="left:233px;top:85px;color:#eeeeee">This line is responsible for 48.2% of all warp stalls. 100.0% of the stalls for this line are of type long_scoreboard</div>
<div class="m" style="left:840.5px;top:86px;color:#eeeeee"><span style="color:#eeeeee">EADD </span><span style="color:#c865d8">R9</span><span style="color:#e6e6e6">, </span><span style="color:#c865d8">R6</span><span style="color:#e6e6e6">, </span><span style="color:#c865d8">R5</span></div>
</div>
<div style="left:35px;top:70px;width:255px;height:112px;background:#fcfcfc;border:1px solid #222"></div>
<div style="left:39px;top:74px;width:16px;height:14px;"><svg width="16" height="14" viewBox="0 0 16 14"><path d="M8 0.6 L15.4 13.2 L0.6 13.2 Z" fill="#f1e33f" stroke="#dccf38" stroke-width="1.1" stroke-linejoin="round"/><path d="M6.9 5.0 L9.1 5.0 L8.7 9.6 L7.3 9.6 Z" fill="#000"/><rect x="7.1" y="10.4" width="1.8" height="1.6" rx="0.7" fill="#000"/></svg></div>
<div class="t" style="left:55px;top:78px;color:#363636;transform:scaleX(0.99);transform-origin:0 0;">This line is responsible for 34.3% of all warp</div>
<div class="t" style="left:39.5px;top:90.5px;color:#363636;transform:scaleX(0.99);transform-origin:0 0;">stalls. 59.6% of the stalls for this line are of</div>
<div class="t" style="left:39.5px;top:105px;color:#363636;transform:scaleX(0.99);transform-origin:0 0;">type imc_miss.</div>
<div style="left:39px;top:134px;width:16px;height:14px;"><svg width="16" height="14" viewBox="0 0 16 14"><path d="M8 0.6 L15.4 13.2 L0.6 13.2 Z" fill="#f1e33f" stroke="#dccf38" stroke-width="1.1" stroke-linejoin="round"/><path d="M6.9 5.0 L9.1 5.0 L8.7 9.6 L7.3 9.6 Z" fill="#000"/><rect x="7.1" y="10.4" width="1.8" height="1.6" rx="0.7" fill="#000"/></svg></div>
<div class="t" style="left:55px;top:137.5px;color:#363636;transform:scaleX(0.99);transform-origin:0 0;">This line is responsible for 34.3% of all warp</div>
<div class="t" style="left:39.5px;top:150px;color:#363636;transform:scaleX(0.99);transform-origin:0 0;">stalls. 40.4% of the stalls for this line are of</div>
<div class="t" style="left:39.5px;top:164.5px;color:#363636;transform:scaleX(0.99);transform-origin:0 0;">type no_instruction.</div>
</body></html>
